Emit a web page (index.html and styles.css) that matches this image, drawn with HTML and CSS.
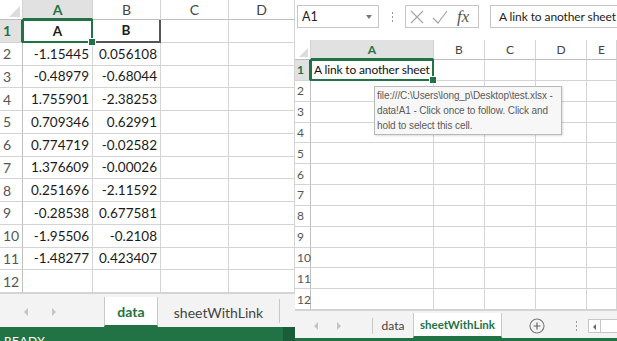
FILE: index.html
```html
<!DOCTYPE html>
<html>
<head>
<meta charset="utf-8">
<link rel="stylesheet" href="styles.css">
</head>
<body>
<div class="shot">
  <div class="panel left">
    <div class="sheet lsheet">
      <div class="corner"><span class="tri"></span></div>
      <div class="ch sel">A</div><div class="ch">B</div><div class="ch">C</div><div class="ch">D</div>

      <div class="rh sel">1</div><div class="c hd a1">A</div><div class="c hd b1">B</div><div class="c"></div><div class="c"></div>
      <div class="rh">2</div><div class="c n">-1.15445</div><div class="c n">0.056108</div><div class="c"></div><div class="c"></div>
      <div class="rh">3</div><div class="c n">-0.48979</div><div class="c n">-0.68044</div><div class="c"></div><div class="c"></div>
      <div class="rh">4</div><div class="c n">1.755901</div><div class="c n">-2.38253</div><div class="c"></div><div class="c"></div>
      <div class="rh">5</div><div class="c n">0.709346</div><div class="c n">0.62991</div><div class="c"></div><div class="c"></div>
      <div class="rh">6</div><div class="c n">0.774719</div><div class="c n">-0.02582</div><div class="c"></div><div class="c"></div>
      <div class="rh">7</div><div class="c n">1.376609</div><div class="c n">-0.00026</div><div class="c"></div><div class="c"></div>
      <div class="rh">8</div><div class="c n">0.251696</div><div class="c n">-2.11592</div><div class="c"></div><div class="c"></div>
      <div class="rh">9</div><div class="c n">-0.28538</div><div class="c n">0.677581</div><div class="c"></div><div class="c"></div>
      <div class="rh">10</div><div class="c n">-1.95506</div><div class="c n">-0.2108</div><div class="c"></div><div class="c"></div>
      <div class="rh">11</div><div class="c n">-1.48277</div><div class="c n">0.423407</div><div class="c"></div><div class="c"></div>
      <div class="rh">12</div><div class="c"></div><div class="c"></div><div class="c"></div><div class="c"></div>
    </div>
    <div class="ltabs">
      <span class="nav"><span class="arr l"></span><span class="arr r"></span></span>
      <span class="tab active">data</span>
      <span class="tab">sheetWithLink</span>
      <span class="vsep"></span>
    </div>
    <div class="status"><span class="ready">READY</span><span class="statend"></span></div>
  </div>

  <div class="panel right">
    <div class="fbar">
      <div class="namebox"><span>A1</span><span class="dd"></span></div>
      <div class="vdots"><i></i><i></i><i></i></div>
      <div class="fxbox">
        <svg class="ico" width="16" height="16" viewBox="0 0 16 16"><path d="M2 2 L14 14 M14 2 L2 14" stroke="#a6a6a6" stroke-width="1.2" fill="none"/></svg>
        <svg class="ico" width="18" height="16" viewBox="0 0 18 16"><path d="M2 9 L7 14 L16 2" stroke="#a6a6a6" stroke-width="1.2" fill="none"/></svg>
        <span class="fx">fx</span>
      </div>
      <div class="formula">A link to another sheet</div>
    </div>
    <div class="sheet rsheet">
      <div class="corner"><span class="tri"></span></div>
      <div class="ch sel">A</div><div class="ch">B</div><div class="ch">C</div><div class="ch">D</div><div class="ch">E</div>

      <div class="rh sel">1</div><div class="c ra1">A link to another sheet</div><div class="c"></div><div class="c"></div><div class="c"></div><div class="c"></div>
      <div class="rh">2</div><div class="c"></div><div class="c"></div><div class="c"></div><div class="c"></div><div class="c"></div>
      <div class="rh">3</div><div class="c"></div><div class="c"></div><div class="c"></div><div class="c"></div><div class="c"></div>
      <div class="rh">4</div><div class="c"></div><div class="c"></div><div class="c"></div><div class="c"></div><div class="c"></div>
      <div class="rh">5</div><div class="c"></div><div class="c"></div><div class="c"></div><div class="c"></div><div class="c"></div>
      <div class="rh">6</div><div class="c"></div><div class="c"></div><div class="c"></div><div class="c"></div><div class="c"></div>
      <div class="rh">7</div><div class="c"></div><div class="c"></div><div class="c"></div><div class="c"></div><div class="c"></div>
      <div class="rh">8</div><div class="c"></div><div class="c"></div><div class="c"></div><div class="c"></div><div class="c"></div>
      <div class="rh">9</div><div class="c"></div><div class="c"></div><div class="c"></div><div class="c"></div><div class="c"></div>
      <div class="rh">10</div><div class="c"></div><div class="c"></div><div class="c"></div><div class="c"></div><div class="c"></div>
      <div class="rh">11</div><div class="c"></div><div class="c"></div><div class="c"></div><div class="c"></div><div class="c"></div>
      <div class="rh">12</div><div class="c"></div><div class="c"></div><div class="c"></div><div class="c"></div><div class="c"></div>
    </div>
    <div class="tooltip">file:///C:\Users\long_p\Desktop\test.xlsx -<br>data!A1 - Click once to follow. Click and<br>hold to select this cell.</div>
    <div class="rtabs">
      <span class="nav"><span class="arr l"></span><span class="arr r"></span></span>
      <span class="vsep"></span>
      <span class="tab">data</span>
      <span class="tab active">sheetWithLink</span>
      <span class="plus">
        <svg width="16" height="16" viewBox="0 0 16 16"><circle cx="8" cy="8" r="7" stroke="#777" stroke-width="1.1" fill="none"/><path d="M8 4.5 V11.5 M4.5 8 H11.5" stroke="#666" stroke-width="1.2"/></svg>
      </span>
      <span class="vdots small"><i></i><i></i><i></i></span>
      <span class="hscroll"><span class="sarr"></span></span>
    </div>
    <div class="rgreen"></div>
  </div>
</div>
</body>
</html>
```
FILE: styles.css
```css
* { box-sizing: border-box; }
html, body { margin: 0; padding: 0; background: #fff; }
body { width: 617px; height: 341px; overflow: hidden; font-family: Lato, "Liberation Sans", sans-serif; color: #1a1a1a; }
.shot { display: flex; width: 617px; height: 341px; }
.panel { position: relative; height: 341px; overflow: hidden; background: #fff; }
.left { width: 295px; display: flex; flex-direction: column; }
.right { width: 322px; display: flex; flex-direction: column; }

.sheet { display: grid; }
.lsheet { grid-template-columns: 23px 70px 68px 68px 66px; grid-template-rows: 20px repeat(12, 1fr); height: 293px; font-size: 13.5px; }
.rsheet { grid-template-columns: 16px 123px 51px 51px 51px 1fr; grid-template-rows: 20px repeat(12, 1fr); height: 270px; font-size: 12.5px; }

.corner { position: relative; background: #fff; border-right: 1px solid #d4d4d4; border-bottom: 1px solid #bfbfbf; }
.corner .tri { position: absolute; right: 2px; bottom: 2px; width: 0; height: 0; border-left: 11px solid transparent; border-bottom: 11px solid #dcdcdc; }
.rsheet .corner .tri { border-left-width: 9px; border-bottom-width: 9px; }

.ch { display: flex; align-items: center; justify-content: center; color: #444; border-right: 1px solid #d4d4d4; border-bottom: 1px solid #bfbfbf; font-size: 14px; }
.rsheet .ch { font-size: 12px; }
.ch.sel { background: #e1e1e1; color: #217346; font-weight: bold; border-bottom: 2px solid #217346; }

.rh { display: flex; align-items: center; justify-content: flex-start; padding-left: 3px; color: #555; border-right: 1px solid #bfbfbf; border-bottom: 1px solid #d4d4d4; font-size: 14px; }
.rsheet .rh { font-size: 12px; padding-left: 2px; }
.rh.sel { background: #e1e1e1; color: #217346; font-weight: bold; border-right: 2px solid #217346; }

.c { display: flex; align-items: center; border-right: 1px solid #d4d4d4; border-bottom: 1px solid #d4d4d4; white-space: nowrap; }
.c.n { justify-content: flex-end; padding-right: 3px; }
.c.hd { justify-content: center; font-weight: bold; }
.b1 { border-right: 2px solid #555; border-bottom: 2px solid #555; }
.a1, .ra1 { position: relative; }
.a1::after, .ra1::after { content: ""; position: absolute; left: -1px; top: -1px; right: -1px; bottom: -1px; border: 2px solid #217346; }
.a1::before, .ra1::before { content: ""; position: absolute; right: -4px; bottom: -4px; width: 6px; height: 6px; background: #217346; border: 1px solid #fff; z-index: 2; }
.ra1 { padding-left: 3px; overflow: visible; font-size: 12px; letter-spacing: -0.15px; color: #111; }

/* left tabs */
.ltabs { height: 34px; background: #f3f3f3; display: flex; align-items: stretch; padding-top: 3px; border-top: 1px solid #d4d4d4; }
.nav { display: flex; align-items: center; }
.ltabs .nav { width: 104px; padding-left: 24px; gap: 24px; }
.arr { width: 0; height: 0; border-top: 4px solid transparent; border-bottom: 4px solid transparent; }
.arr.l { border-right: 4px solid #c4c4c4; }
.arr.r { border-left: 4px solid #c4c4c4; }
.tab { display: flex; align-items: center; justify-content: center; color: #444; font-size: 14px; }
.ltabs .tab { padding: 0 12px; }
.ltabs .tab:nth-of-type(2) { width: 54px; }
.ltabs .tab:nth-of-type(3) { width: 121px; }
.tab.active { background: #fff; color: #217346; font-weight: bold; border-left: 1px solid #c8c8c8; border-right: 1px solid #c8c8c8; border-bottom: 2px solid #217346; }
.vsep { width: 1px; background: #c8c8c8; margin: 2px 0 4px; }
.status { height: 14px; background: #217346; display: flex; overflow: hidden; }
.ready { flex: 1; color: #fff; font-size: 12px; padding-left: 4px; line-height: 12px; margin-top: 8px; letter-spacing: 0.5px; }
.statend { width: 12px; background: #1a5e39; }

/* formula bar */
.fbar { height: 40px; display: flex; align-items: flex-start; padding-top: 5px; font-size: 13px; }
.namebox { width: 82px; height: 23px; margin-left: 2px; border: 1px solid #c6c6c6; display: flex; align-items: center; justify-content: space-between; padding: 0 6px 0 4px; color: #222; font-size: 12.5px; }
.dd { width: 0; height: 0; border-left: 3px solid transparent; border-right: 3px solid transparent; border-top: 4px solid #777; }
.vdots { width: 26px; height: 23px; display: flex; flex-direction: column; align-items: center; justify-content: center; gap: 2px; }
.vdots i { display: block; width: 1px; height: 2px; background: #999; }
.fxbox { width: 74px; height: 23px; border: 1px solid #c6c6c6; display: flex; align-items: center; padding-left: 3px; gap: 6px; }
.fx { font-family: "Liberation Serif", serif; font-style: italic; font-size: 17px; color: #555; margin-left: 2px; }
.formula { flex: 1; height: 23px; margin-left: 11px; border: 1px solid #c6c6c6; border-right: none; display: flex; align-items: center; padding-left: 8px; white-space: nowrap; font-size: 12px; letter-spacing: -0.1px; color: #222; }

.tooltip { position: absolute; left: 79px; top: 86px; width: 188px; height: 49px; background: #f7f7f7; border: 1px solid #b9b9b9; box-shadow: 1px 1px 2px rgba(0,0,0,0.15); font-family: "Liberation Sans", sans-serif; font-size: 10px; line-height: 15px; color: #5a5a5a; padding: 1px 0 0 2px; white-space: nowrap; letter-spacing: -0.1px; }

/* right tabs */
.rtabs { height: 28px; background: #f3f3f3; display: flex; align-items: stretch; padding-top: 2px; border-top: 1px solid #d4d4d4; }
.rtabs .nav { width: 77px; padding-left: 19px; gap: 19px; }
.rtabs .vsep { margin: 5px 0 4px; }
.rtabs .tab { font-size: 12px; }
.rtabs .tab.active { font-size: 11.5px; }
.rtabs .tab:nth-of-type(3) { width: 40px; }
.rtabs .tab:nth-of-type(4) { width: 89px; }
.plus { width: 68px; display: flex; align-items: center; justify-content: center; padding-left: 2px; }
.vdots.small { width: 12px; height: auto; }
.hscroll { margin: 6px 0 5px 6px; flex: 1; border: 1px solid #c6c6c6; border-right: none; background: #fff; display: flex; }
.sarr { width: 12px; border-right: 1px solid #c6c6c6; position: relative; }
.sarr::after { content: ""; position: absolute; left: 4px; top: 4px; border-top: 3px solid transparent; border-bottom: 3px solid transparent; border-right: 3px solid #666; }
.rgreen { height: 3px; background: #217346; }
```
